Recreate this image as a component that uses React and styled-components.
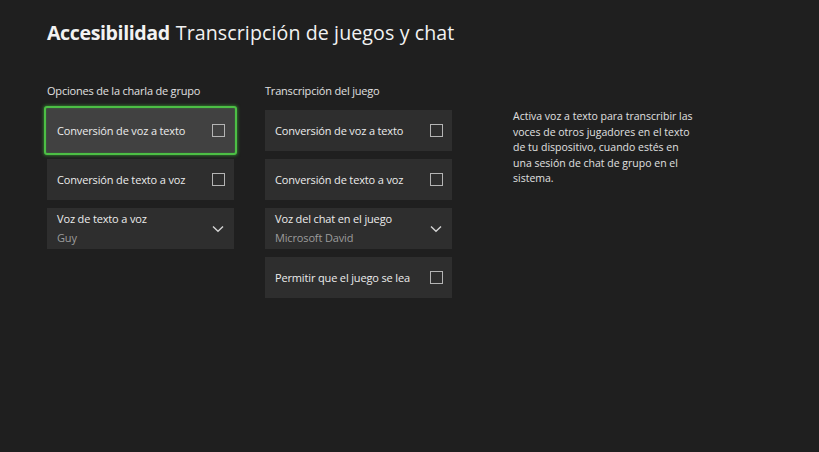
import React from "react";
import styled, { createGlobalStyle } from "styled-components";

const GlobalStyle = createGlobalStyle`
  html, body {
    margin: 0;
    padding: 0;
    background: #1f1f1f;
  }
  body {
    font-family: "Open Sans", "Noto Sans", sans-serif;
    color: #e8e8e8;
    width: 819px;
    height: 452px;
    overflow: hidden;
  }
`;

const Page = styled.div`
  padding: 19px 0 0 47px;
`;

const Title = styled.h1`
  margin: 0;
  font-size: 19.6px;
  line-height: 28px;
  font-weight: 400;
  color: #f2f2f2;
  letter-spacing: 0.1px;

  b {
    font-weight: 700;
    letter-spacing: -0.4px;
    margin-right: 6px;
  }
`;

const Content = styled.div`
  display: flex;
  margin-top: 36px;
`;

const Column = styled.div`
  width: 187px;
  margin-right: ${(p) => p.$gap || 0}px;
  display: flex;
  flex-direction: column;
`;

const ColumnLabel = styled.div`
  font-size: 11px;
  line-height: 15px;
  letter-spacing: -0.2px;
  color: #e0e0e0;
  margin-bottom: 12px;
`;

const CardList = styled.div`
  display: flex;
  flex-direction: column;
  gap: 8px;
`;

const Card = styled.div`
  display: flex;
  align-items: center;
  justify-content: space-between;
  height: 41px;
  box-sizing: border-box;
  padding: 0 9px 0 10px;
  background: #2e2e2e;
  font-size: 11px;
  letter-spacing: -0.15px;
  color: #ececec;

  ${(p) =>
    p.$focused &&
    `
    margin: -4px -3px -4px -3px;
    height: 49px;
    padding: 0 10px 0 11px;
    background: #414141;
    border: 2px solid #4cbf45;
    border-radius: 3px;
    box-shadow: 0 0 3px 1px rgba(60, 170, 55, 0.55), inset 0 0 2px rgba(60, 170, 55, 0.5);
  `}
`;

const CardText = styled.div`
  display: flex;
  flex-direction: column;
  gap: 4px;
  margin-top: -2px;
`;

const Secondary = styled.span`
  color: #9c9c9c;
  font-size: 11px;
`;

const Checkbox = styled.span`
  width: 11px;
  height: 11px;
  border: 1.5px solid #b4b4b4;
  flex-shrink: 0;
`;

const Chevron = () => (
  <svg width="12" height="8" viewBox="0 0 12 8" style={{ flexShrink: 0, marginRight: 1 }}>
    <path d="M1 1.5 L6 6.2 L11 1.5" fill="none" stroke="#d4d4d4" strokeWidth="1.4" />
  </svg>
);

const Description = styled.p`
  margin: 26px 0 0 0;
  width: 186px;
  font-size: 10.5px;
  line-height: 15.5px;
  color: #e0e0e0;
`;

const CheckCard = ({ label, focused }) => (
  <Card $focused={focused}>
    <span>{label}</span>
    <Checkbox />
  </Card>
);

const SelectCard = ({ label, value }) => (
  <Card>
    <CardText>
      <span>{label}</span>
      <Secondary>{value}</Secondary>
    </CardText>
    <Chevron />
  </Card>
);

export default function App() {
  return (
    <>
      <GlobalStyle />
      <Page>
        <Title>
          <b>Accesibilidad</b>Transcripción de juegos y chat
        </Title>
        <Content>
          <Column $gap={31}>
            <ColumnLabel>Opciones de la charla de grupo</ColumnLabel>
            <CardList>
              <CheckCard label="Conversión de voz a texto" focused />
              <CheckCard label="Conversión de texto a voz" />
              <SelectCard label="Voz de texto a voz" value="Guy" />
            </CardList>
          </Column>
          <Column $gap={61}>
            <ColumnLabel>Transcripción del juego</ColumnLabel>
            <CardList>
              <CheckCard label="Conversión de voz a texto" />
              <CheckCard label="Conversión de texto a voz" />
              <SelectCard label="Voz del chat en el juego" value="Microsoft David" />
              <CheckCard label="Permitir que el juego se lea" />
            </CardList>
          </Column>
          <Description>
            Activa voz a texto para transcribir las voces de otros jugadores en el
            texto de tu dispositivo, cuando estés en una sesión de chat de grupo en
            el sistema.
          </Description>
        </Content>
      </Page>
    </>
  );
}
